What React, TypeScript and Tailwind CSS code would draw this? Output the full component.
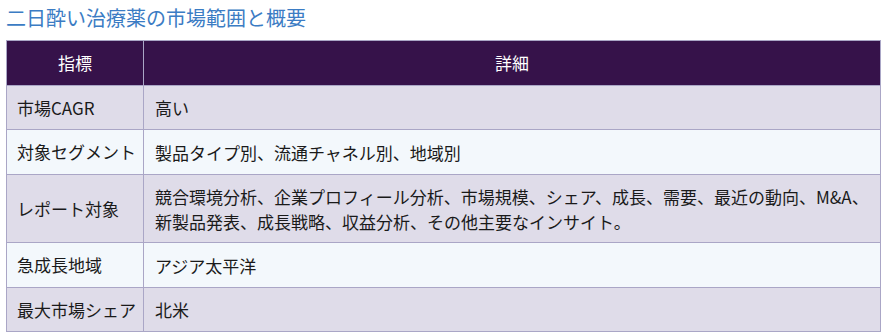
const rows: { label: string; detail: string; h: string }[] = [
  { label: "市場CAGR", detail: "高い", h: "h-[44px]" },
  { label: "対象セグメント", detail: "製品タイプ別、流通チャネル別、地域別", h: "h-[45px]" },
  {
    label: "レポート対象",
    detail:
      "競合環境分析、企業プロフィール分析、市場規模、シェア、成長、需要、最近の動向、M&A、新製品発表、成長戦略、収益分析、その他主要なインサイト。",
    h: "h-[68px]",
  },
  { label: "急成長地域", detail: "アジア太平洋", h: "h-[45px]" },
  { label: "最大市場シェア", detail: "北米", h: "h-[44px]" },
];

export default function App() {
  return (
    <div
      className="w-[894px] h-[336px] bg-white pl-[6px] overflow-hidden"
      style={{ fontFamily: '"Noto Sans CJK JP", "Noto Sans", sans-serif' }}
    >
      {/* Title */}
      <h2 className="pt-[4px] mb-[8px] text-[20px] leading-[28px] font-normal text-[#3b7cc4]">
        二日酔い治療薬の市場範囲と概要
      </h2>

      {/* Table */}
      <table className="w-[875px] border-collapse border border-[#aaa6c6] text-[17px] text-[#1a1a1a]">
        <thead>
          <tr className="h-[45px] bg-[#36124a] text-white">
            <th className="w-[137px] border border-[#aaa6c6] p-0 leading-[22px] font-normal text-center">
              指標
            </th>
            <th className="border border-[#aaa6c6] p-0 leading-[22px] font-normal text-center">
              詳細
            </th>
          </tr>
        </thead>
        <tbody>
          {rows.map((row, i) => (
            <tr
              key={row.label}
              className={(i % 2 === 0 ? "bg-[#dfdce9] " : "bg-[#f3f8fc] ") + row.h}
            >
              <td className="border border-[#aaa6c6] pl-[10px] pr-[6px] py-0 leading-[22px] align-middle whitespace-nowrap">
                {row.label}
              </td>
              <td className="border border-[#aaa6c6] pl-[11px] pr-[10px] py-0 leading-[25px] align-middle">
                {row.detail}
              </td>
            </tr>
          ))}
        </tbody>
      </table>
    </div>
  );
}
